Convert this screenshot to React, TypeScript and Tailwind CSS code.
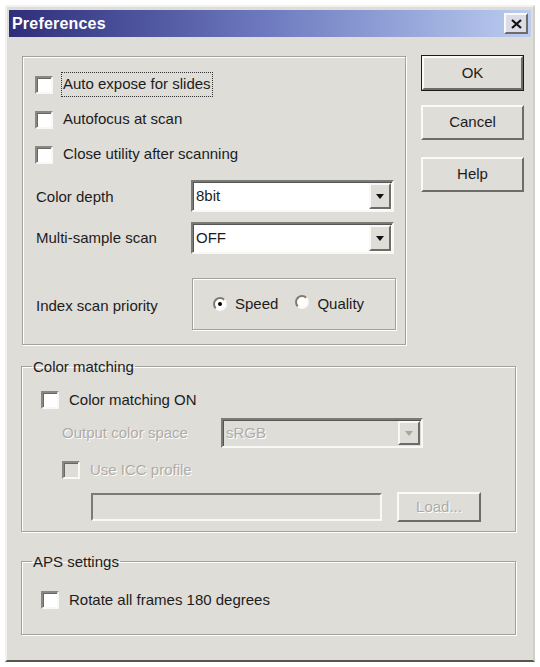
import React from 'react';

const font = { fontFamily: '"Liberation Sans", Arial, sans-serif' };

function CheckBox({ disabled = false }: { disabled?: boolean }) {
  return (
    <span
      className={`inline-block w-[18px] h-[18px] shrink-0 border-2 border-t-[#8a8883] border-l-[#8a8883] border-b-[#f8f8f6] border-r-[#f8f8f6] shadow-[inset_1px_1px_0_#6a6863] ${
        disabled ? 'bg-[#dfddd8]' : 'bg-white'
      }`}
    />
  );
}

function Radio({ checked }: { checked: boolean }) {
  return (
    <span className="inline-flex items-center justify-center w-[14px] h-[14px] rounded-full bg-white border-2 border-t-[#7c7a75] border-l-[#7c7a75] border-b-[#f8f8f6] border-r-[#f8f8f6]">
      {checked && <span className="block w-[4px] h-[4px] rounded-full bg-black" />}
    </span>
  );
}

function Select({ value, width, height, disabled = false }: { value: string; width: string; height: string; disabled?: boolean }) {
  return (
    <div
      className={`flex items-stretch ${width} ${height} border-2 border-t-[#7c7a75] border-l-[#7c7a75] border-b-[#f8f8f6] border-r-[#f8f8f6] shadow-[inset_1px_1px_0_#555] ${
        disabled ? 'bg-[#dfddd8]' : 'bg-white'
      }`}
    >
      <span
        className={`flex-1 flex items-center pl-[3px] text-[15px] ${
          disabled ? 'text-[#aeaca6] [text-shadow:1px_1px_0_#fff]' : 'text-[#1c1c1c]'
        }`}
      >
        {value}
      </span>
      <span className="w-[22px] m-[1px] flex items-center justify-center bg-[#dfddd8] border-2 border-t-[#f8f8f6] border-l-[#f8f8f6] border-b-[#6e6c68] border-r-[#6e6c68]">
        <svg width="8" height="5" viewBox="0 0 8 5">
          <path d="M0 0h8L4 5z" fill={disabled ? '#a8a6a0' : '#111'} />
        </svg>
      </span>
    </div>
  );
}

function Button({ label, isDefault = false, disabled = false, className = '' }: { label: string; isDefault?: boolean; disabled?: boolean; className?: string }) {
  return (
    <div className={`${isDefault ? 'border border-[#1c1c1c]' : ''} ${className}`}>
      <div
        className={`h-full flex items-center justify-center text-[15px] bg-[#dfddd8] border-2 border-t-[#fafaf8] border-l-[#fafaf8] border-b-[#6e6c68] border-r-[#6e6c68] ${
          disabled ? 'text-[#aeaca6] [text-shadow:1px_1px_0_#fff]' : 'text-[#1c1c1c]'
        }`}
      >
        {label}
      </div>
    </div>
  );
}

function CheckRow({ label, focus = false, disabled = false, className = '' }: { label: string; focus?: boolean; disabled?: boolean; className?: string }) {
  return (
    <div className={`flex items-center ${className}`}>
      <CheckBox disabled={disabled} />
      <span
        className={`ml-[8px] text-[15px] ${focus ? 'border border-dotted border-[#333] px-[1px]' : 'px-[2px]'} ${
          disabled ? 'text-[#aeaca6] [text-shadow:1px_1px_0_#fff]' : 'text-[#1c1c1c]'
        }`}
      >
        {label}
      </span>
    </div>
  );
}

const groupBorder = 'border border-[#a3a19b] shadow-[inset_1px_1px_0_#fff,1px_1px_0_#fff]';

export default function App() {
  return (
    <div className="bg-white w-[540px] h-[667px] pt-[5px] pl-[5px]" style={font}>
      <div className="w-[530px] h-[657px] bg-[#dfddd8] border-2 border-t-[#f2f1ee] border-l-[#f2f1ee] border-b-[#58564f] border-r-[#d0cec8] p-[2px] flex flex-col">
        {/* title bar */}
        <div className="h-[27px] mt-[1px] flex items-center justify-between bg-gradient-to-r from-[#2f2e7a] via-[#6f7bc0] to-[#bccdf0] pl-[3px] pr-[3px]">
          <span className="text-white font-bold text-[16px] tracking-[0.2px]">Preferences</span>
          <span className="w-[24px] h-[21px] flex items-center justify-center bg-[#dcdce6] border-2 border-t-[#fafaf8] border-l-[#fafaf8] border-b-[#6e6c68] border-r-[#6e6c68]">
            <svg width="11" height="10" viewBox="0 0 11 10">
              <path d="M1 1l9 8M10 1l-9 8" stroke="#111" strokeWidth="2.2" />
            </svg>
          </span>
        </div>

        <div className="pl-[13px] flex flex-col">
          {/* top row: options group + buttons */}
          <div className="flex">
            <div className={`mt-[19px] w-[384px] ${groupBorder} pt-[10px] pl-[12px] pb-[14px]`}>
              <CheckRow label="Auto expose for slides" focus className="h-[35px]" />
              <CheckRow label="Autofocus at scan" className="h-[35px]" />
              <CheckRow label="Close utility after scanning" className="h-[35px]" />

              <div className="flex items-center mt-[8px]">
                <span className="w-[156px] text-[15px] text-[#1c1c1c] pl-[1px] pt-[3px]">Color depth</span>
                <Select value="8bit" width="w-[203px]" height="h-[32px]" />
              </div>
              <div className="flex items-center mt-[10px]">
                <span className="w-[156px] text-[15px] text-[#1c1c1c] pl-[1px]">Multi-sample scan</span>
                <Select value="OFF" width="w-[203px]" height="h-[32px]" />
              </div>
              <div className="flex items-center mt-[24px]">
                <span className="w-[157px] text-[15px] text-[#1c1c1c] pl-[1px] pt-[4px]">Index scan priority</span>
                <div className={`w-[204px] h-[52px] ${groupBorder} flex items-center pl-[20px]`}>
                  <Radio checked />
                  <span className="ml-[8px] text-[15px] text-[#1c1c1c]">Speed</span>
                  <span className="ml-[17px]">
                    <Radio checked={false} />
                  </span>
                  <span className="ml-[8px] text-[15px] text-[#1c1c1c]">Quality</span>
                </div>
              </div>
            </div>

            <div className="ml-[15px] mt-[18px] flex flex-col">
              <Button label="OK" isDefault className="w-[103px] h-[36px]" />
              <Button label="Cancel" className="w-[103px] h-[35px] mt-[14px]" />
              <Button label="Help" className="w-[103px] h-[35px] mt-[17px]" />
            </div>
          </div>

          {/* colour matching */}
          <fieldset className={`mt-[13px] w-[495px] -ml-[1px] ${groupBorder} pl-[19px] pb-[9px]`}>
            <legend className="-ml-[9px] px-[1px] text-[15px] text-[#1c1c1c] leading-[17px]">Color matching</legend>
            <CheckRow label="Color matching ON" className="h-[30px] mt-[10px]" />
            <div className="flex items-center h-[30px] mt-[3px] ml-[21px]">
              <span className="w-[159px] text-[15px] text-[#aeaca6] [text-shadow:1px_1px_0_#fff]">Output color space</span>
              <Select value="sRGB" width="w-[202px]" height="h-[30px]" disabled />
            </div>
            <CheckRow label="Use ICC profile" disabled className="h-[24px] mt-[10px] ml-[21px]" />
            <div className="flex items-center mt-[10px] ml-[50px]">
              <div className="w-[291px] h-[28px] bg-[#dfddd8] border-2 border-t-[#7c7a75] border-l-[#7c7a75] border-b-[#f8f8f6] border-r-[#f8f8f6]" />
              <Button label="Load..." disabled className="w-[84px] h-[30px] ml-[15px]" />
            </div>
          </fieldset>

          {/* APS */}
          <fieldset className={`mt-[21px] w-[495px] -ml-[1px] ${groupBorder} pl-[19px] pb-[25px]`}>
            <legend className="-ml-[9px] px-[1px] text-[15px] text-[#1c1c1c] leading-[17px]">APS settings</legend>
            <CheckRow label="Rotate all frames 180 degrees" className="h-[18px] mt-[21px]" />
          </fieldset>
        </div>
      </div>
    </div>
  );
}
